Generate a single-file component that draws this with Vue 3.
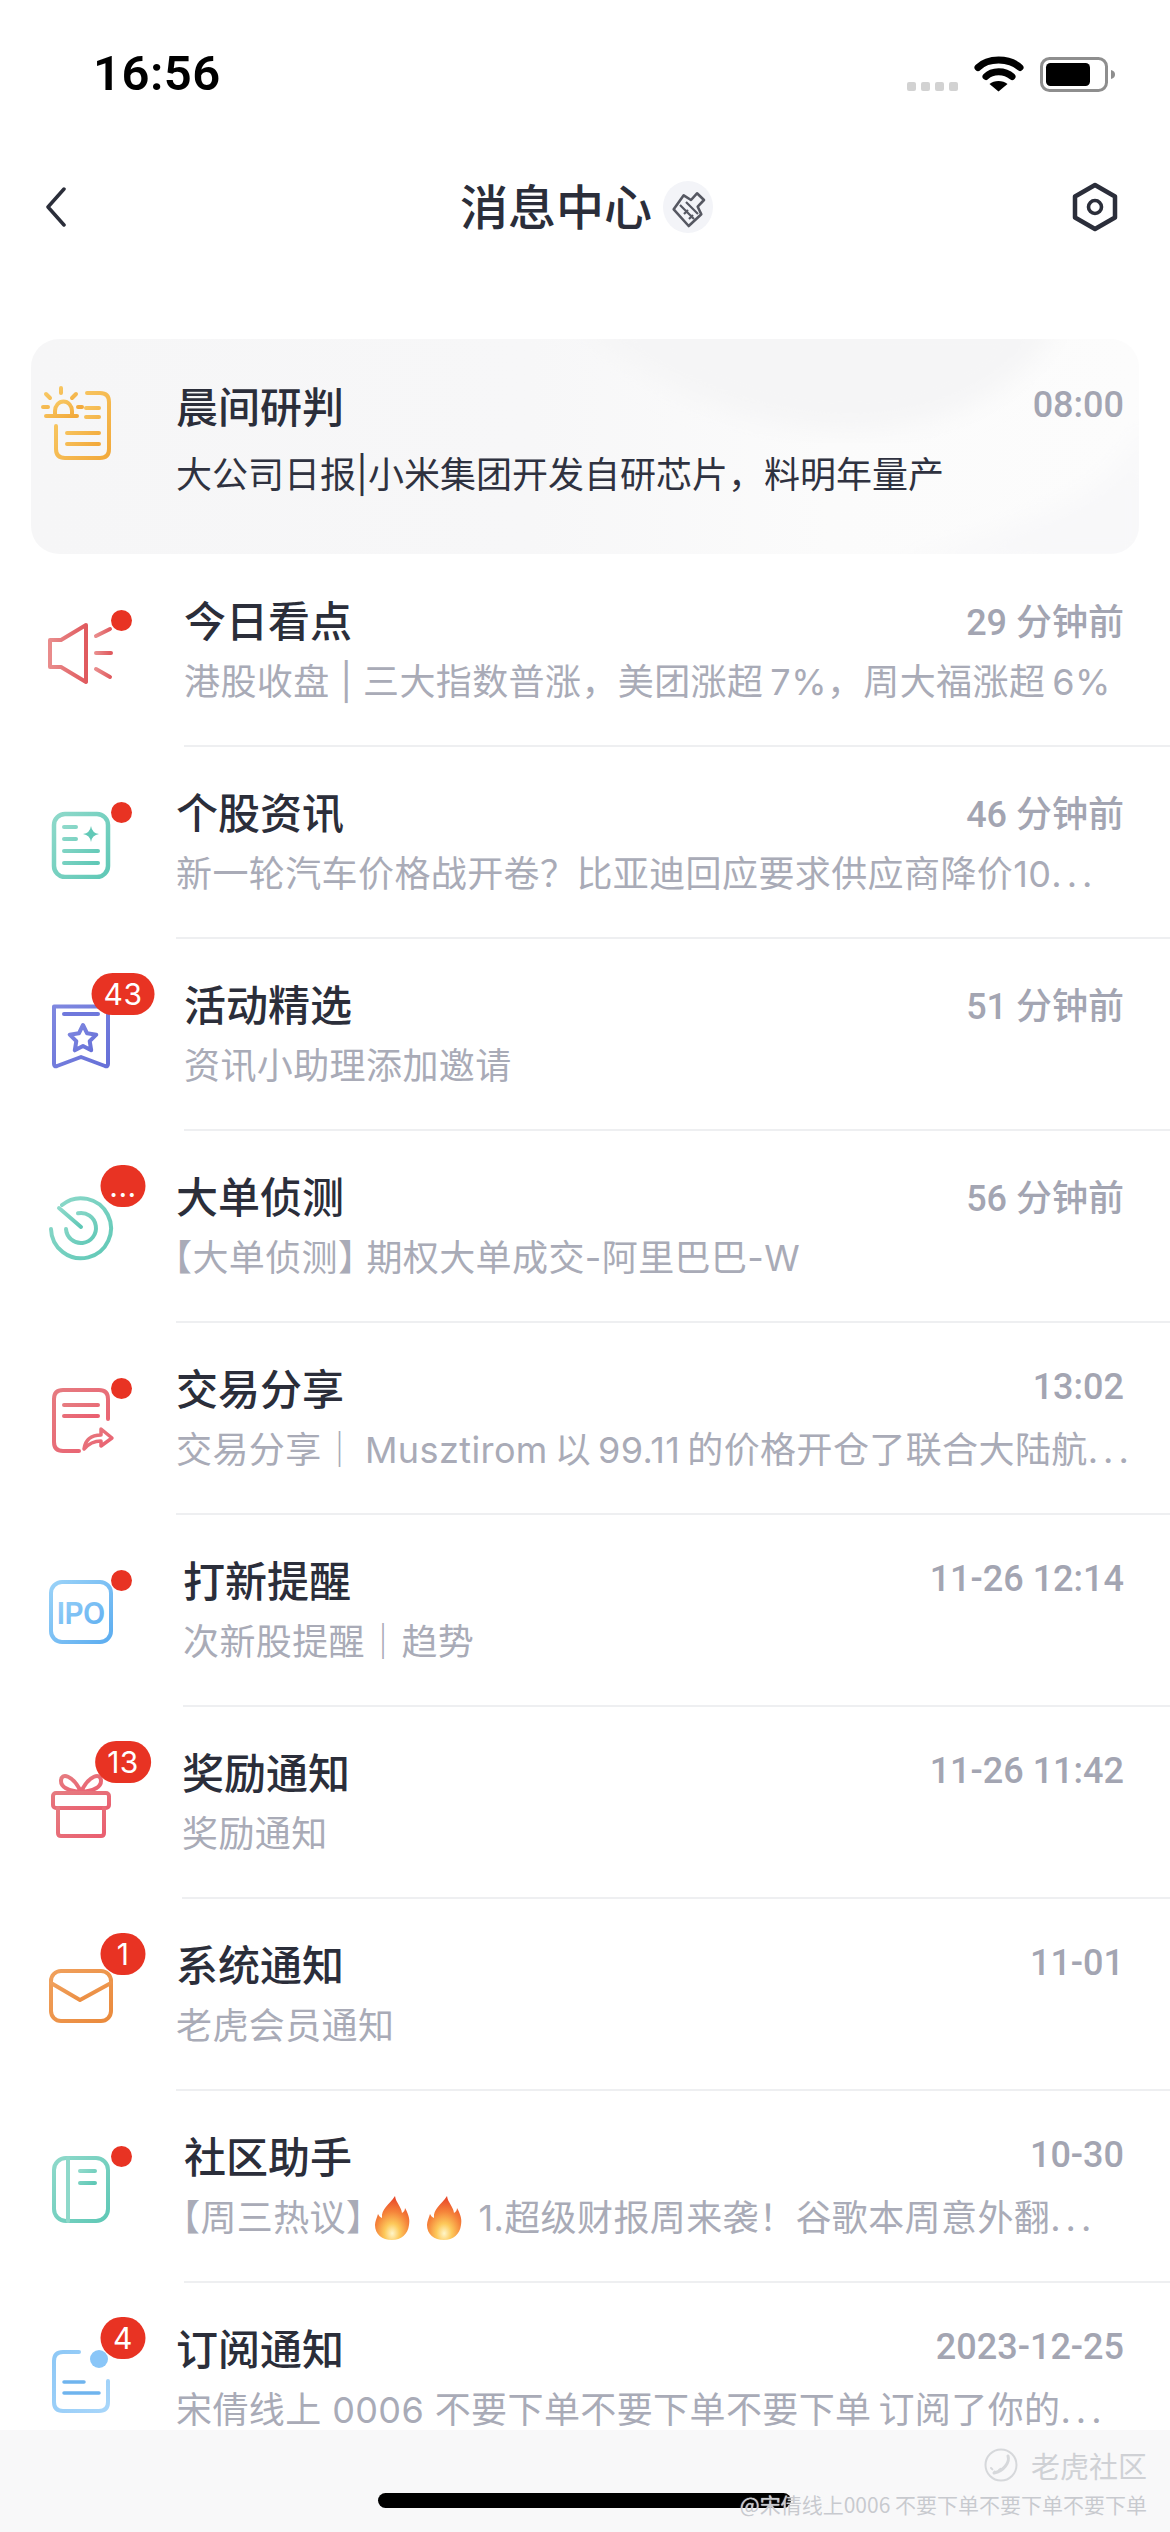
<template>
  <div class="page">
    <svg class="defs" width="0" height="0">
      <defs>
        <linearGradient id="g-red" x1="0" y1="0" x2="1" y2="0"><stop offset="0" stop-color="#e98c8c" /><stop offset="1" stop-color="#e05a5e" /></linearGradient>
        <linearGradient id="g-teal" x1="0" y1="0" x2="1" y2="1"><stop offset="0" stop-color="#8ed9ca" /><stop offset="1" stop-color="#5fc8b6" /></linearGradient>
        <linearGradient id="g-violet" x1="0" y1="0" x2="1" y2="1"><stop offset="0" stop-color="#7f88e0" /><stop offset="1" stop-color="#6670d8" /></linearGradient>
        <linearGradient id="g-rose" x1="0" y1="0" x2="1" y2="1"><stop offset="0" stop-color="#e67b80" /><stop offset="1" stop-color="#ea5f70" /></linearGradient>
        <linearGradient id="g-blue" x1="0" y1="0" x2="1" y2="1"><stop offset="0" stop-color="#9ad2f8" /><stop offset="1" stop-color="#5cadf0" /></linearGradient>
        <linearGradient id="g-orange" x1="0" y1="0" x2="1" y2="1"><stop offset="0" stop-color="#f0a05c" /><stop offset="1" stop-color="#ea8a3c" /></linearGradient>
        <linearGradient id="g-sky" x1="0" y1="0" x2="1" y2="1"><stop offset="0" stop-color="#8ec8f6" /><stop offset="1" stop-color="#a8d6fa" /></linearGradient>
        <linearGradient id="g-amber" x1="0" y1="0" x2="1" y2="1"><stop offset="0" stop-color="#f9cd6a" /><stop offset="1" stop-color="#f2a93b" /></linearGradient>
        <radialGradient id="g-flame" cx="0.5" cy="0.85" r="0.8">
          <stop offset="0" stop-color="#fff6c8" />
          <stop offset="0.28" stop-color="#fdc95a" />
          <stop offset="0.62" stop-color="#f5843a" />
          <stop offset="1" stop-color="#e9482a" />
        </radialGradient>
      </defs>
    </svg>

    <header class="status">
      <span class="clock">16:56</span>
      <svg class="status-icons" width="208" height="37" viewBox="0 0 208 37">
        <rect x="0" y="27" width="9" height="9" rx="2" fill="#d2d2d2" />
        <rect x="14" y="27" width="9" height="9" rx="2" fill="#d2d2d2" />
        <rect x="28" y="27" width="9" height="9" rx="2" fill="#d2d2d2" />
        <rect x="42" y="27" width="9" height="9" rx="2" fill="#d2d2d2" />
        <path d="M71 12.500C81 2.500 102 2.500 113 12.500" fill="none" stroke="#000" stroke-width="7" stroke-linecap="round" />
        <path d="M79 21.500C85 15 98 15 105 21.500" fill="none" stroke="#000" stroke-width="7" stroke-linecap="round" />
        <path d="M82.500 29C87 25 96 25 100.500 29L91.500 36.500Z" fill="#000" />
        <rect x="134.500" y="3.500" width="65" height="32" rx="8" fill="none" stroke="#8e8e8e" stroke-width="3" />
        <rect x="139" y="8" width="44" height="23" rx="4.500" fill="#000" />
        <path d="M204 15C207 15.500 208 17.500 208 19.500C208 21.500 207 23.500 204 24Z" fill="#8e8e8e" />
      </svg>
    </header>

    <nav class="nav">
      <svg class="nav-back" width="22" height="40" viewBox="0 0 22 40">
        <path d="M19 2L3 20L19 38" fill="none" stroke="#2b2e3a" stroke-width="3.500" stroke-linecap="round" stroke-linejoin="round" />
      </svg>
      <div class="nav-center">
        <span class="nav-title">消息中心</span>
        <span class="nav-mark">
          <svg width="50" height="52" viewBox="0 0 50 52">
            <path d="M20.700 14.300L28 19L34 12.300L41 19L34.700 25.700L38.300 33.300L25.700 45L10.700 28.300Z" fill="none" stroke="#565862" stroke-width="2.600" stroke-linejoin="round" />
            <path d="M17 24L31 38M21 33L25 29M26 38L30 34M23 21L35 33" fill="none" stroke="#565862" stroke-width="2.200" />
          </svg>
        </span>
      </div>
      <svg class="nav-gear" width="48" height="50" viewBox="0 0 48 50">
        <path d="M24 3L44 14.500V35.500L24 47L4 35.500V14.500Z" fill="none" stroke="#2b2e3a" stroke-width="4.500" stroke-linejoin="round" />
        <circle cx="24" cy="25" r="6.500" fill="none" stroke="#2b2e3a" stroke-width="3.600" />
      </svg>
    </nav>

    <section class="card">
      <svg class="card-waves" width="1108" height="215" viewBox="0 0 1108 215">
        <defs>
          <filter id="soft"><feGaussianBlur stdDeviation="12" /></filter>
        </defs>
        <path d="M540 -20C620 50 720 92 820 92C900 92 990 60 1030 -20Z" fill="#f5f5f6" filter="url(#soft)" />
        <path d="M1108 92C1085 160 980 190 860 225H1120V92Z" fill="#f8f8f9" filter="url(#soft)" />
      </svg>
      <svg class="card-icon" width="72" height="80" viewBox="0 0 72 80" fill="none" stroke="url(#g-amber)" stroke-width="4" stroke-linecap="round" stroke-linejoin="round">
        <path d="M47 9H60Q69 9 69 18V65Q69 74 60 74H25Q16 74 16 65V42" />
        <path d="M46 24H59M46 33H59M27 49H59M27 60H59" />
        <path d="M15 31V27A8 9 0 0 1 32 27V31M6 32H37" />
        <path d="M21 4V9M6 10L10 14M36 10L32 14M3 23H8M38 23H42" />
      </svg>
      <div class="card-text">
        <div class="line">
          <span class="title">晨间研判</span>
          <span class="time">08:00</span>
        </div>
        <p class="card-sub">大公司日报|小米集团开发自研芯片，料明年量产</p>
      </div>
    </section>

    <ul class="list">
      <li v-for="row in rows" :key="row.title" class="row">
        <div class="icon">
          <svg v-if="row.icon === 'speaker'" width="72" height="72" viewBox="0 0 72 72" fill="none" stroke="url(#g-red)" stroke-width="4" stroke-linecap="round" stroke-linejoin="round">
            <path d="M41 10L16 25H5V52H16L41 67Z" />
            <path d="M51 21L65 14M51 38H66M51 54L65 62" />
          </svg>
          <svg v-else-if="row.icon === 'doc'" width="72" height="72" viewBox="0 0 72 72" fill="none" stroke="url(#g-teal)" stroke-width="4.500" stroke-linecap="round">
            <rect x="9" y="7" width="54" height="63" rx="11" />
            <path d="M19 20H31M19 32H31M19 44H53M19 56H53" stroke-width="4" />
            <path d="M46 19Q47 26 54 27Q47 28 46 35Q45 28 38 27Q45 26 46 19Z" fill="#62c9b7" stroke="none" />
          </svg>
          <svg v-else-if="row.icon === 'bookmark'" width="72" height="72" viewBox="0 0 72 72" fill="none" stroke="url(#g-violet)" stroke-width="4" stroke-linecap="round" stroke-linejoin="round">
            <path d="M9 7.500H63V65Q63 68 60 67L36 58L12 67Q9 68 9 65Z" />
            <path d="M19 15H53" stroke="#6f78dc" />
            <path d="M38 26L42.100 34.300L51.300 35.700L44.700 42.200L46.200 51.300L38 47L29.800 51.300L31.300 42.200L24.700 35.700L33.900 34.300Z" />
          </svg>
          <svg v-else-if="row.icon === 'radar'" width="72" height="72" viewBox="0 0 72 72" fill="none" stroke="url(#g-teal)" stroke-width="4" stroke-linecap="round">
            <path d="M17 14A30 30 0 1 1 6 38" />
            <path d="M33 22.300A15 15 0 1 1 21 38" />
            <path d="M14 17L36 36" />
          </svg>
          <svg v-else-if="row.icon === 'share'" width="72" height="72" viewBox="0 0 72 72" fill="none" stroke="url(#g-rose)" stroke-width="4" stroke-linecap="round" stroke-linejoin="round">
            <path d="M63 36V16Q63 7 54 7H18Q9 7 9 16V59Q9 68 18 68H34" />
            <path d="M19 22H53M19 33H53" />
            <path d="M39 66Q41 52 56 52V46L67 55L56 63V58Q46 58 39 66Z" stroke-width="3.500" />
          </svg>
          <svg v-else-if="row.icon === 'ipo'" width="72" height="72" viewBox="0 0 72 72" fill="none">
            <rect x="6" y="7" width="60" height="60" rx="11" stroke="url(#g-blue)" stroke-width="4" />
            <text class="ipo-text" x="12" y="49" textLength="48" lengthAdjust="spacingAndGlyphs" fill="url(#g-blue)">IPO</text>
          </svg>
          <svg v-else-if="row.icon === 'gift'" width="72" height="72" viewBox="0 0 72 72" fill="none" stroke="url(#g-rose)" stroke-width="4" stroke-linecap="round" stroke-linejoin="round">
            <path d="M36 25C28 8 16 5 16 14C16 21 26 24 36 25C44 8 56 5 56 14C56 21 46 24 36 25" />
            <rect x="8" y="26" width="56" height="15" rx="3" />
            <path d="M13 41V66Q13 69 16 69H56Q59 69 59 66V41" />
          </svg>
          <svg v-else-if="row.icon === 'mail'" width="72" height="72" viewBox="0 0 72 72" fill="none" stroke="url(#g-orange)" stroke-width="4" stroke-linecap="round" stroke-linejoin="round">
            <rect x="6" y="12" width="60" height="50" rx="10" />
            <path d="M6 24L35 41L66 24" />
          </svg>
          <svg v-else-if="row.icon === 'book'" width="72" height="72" viewBox="0 0 72 72" fill="none" stroke="url(#g-teal)" stroke-width="4" stroke-linecap="round">
            <rect x="9" y="7" width="54" height="63" rx="12" />
            <path d="M23 7V70" stroke="#8ed9ca" />
            <path d="M35 20H50M35 32H50" />
          </svg>
          <svg v-else width="72" height="72" viewBox="0 0 72 72" fill="none" stroke="url(#g-sky)" stroke-width="4" stroke-linecap="round" stroke-linejoin="round">
            <path d="M34 9H18Q9 9 9 18V59Q9 68 18 68H54Q63 68 63 59V38" />
            <path d="M19 39H39M19 50H54" stroke="#6fb4ee" stroke-width="3.500" />
            <circle cx="54" cy="16" r="9" fill="#8ac6f8" stroke="none" />
          </svg>
          <span v-if="row.badge" class="badge" :class="{ 'badge-more': row.badge === '...' }">{{ row.badge }}</span>
          <span v-else class="dot"></span>
        </div>
        <div class="body" :style="{ marginLeft: row.left - 117 + 'px' }">
          <div class="line">
            <span class="title">{{ row.title }}</span>
            <span class="time">{{ row.time }}</span>
          </div>
          <p class="sub">
            <span v-if="row.lead" class="lead">{{ row.lead }}</span>
            <template v-if="row.flames">
              <svg v-for="n in 2" :key="n" class="flame" width="36" height="46" viewBox="0 0 36 46">
                <path d="M21 1C22 8 27 11 28 18C30 17 31 15 31 13C35 20 36 25 35 30C34 39 27 45 18 45C8 45 1 39 1 30C1 26 3 23 4 19C5 21 6 22 8 23C7 14 15 10 21 1Z" fill="url(#g-flame)" />
              </svg>
            </template>
            <span>{{ row.sub }}</span>
            <span v-if="row.more" class="more">...</span>
          </p>
        </div>
      </li>
    </ul>

    <footer class="footer">
      <div class="home"></div>
      <div class="mark">
        <div class="mark-top">
          <svg width="34" height="34" viewBox="0 0 34 34" fill="none" stroke="#d6d8db" stroke-width="2" stroke-linecap="round">
            <circle cx="17" cy="17" r="15.500" />
            <path d="M24 8C26 14 20 23 10 25" stroke-width="3" />
            <path d="M7 20L11 24M15 22L19 19" stroke-dasharray="2 3" />
          </svg>
          <span>老虎社区</span>
        </div>
        <div class="mark-user">@宋倩线上0006 不要下单不要下单不要下单</div>
      </div>
    </footer>
  </div>
</template>

<script setup>
const rows = [
  { icon: 'speaker', left: 184, title: '今日看点', time: '29 分钟前', sub: '港股收盘 | 三大指数普涨，美团涨超\u20097%，周大福涨超\u20096%' },
  { icon: 'doc', left: 176, title: '个股资讯', time: '46 分钟前', sub: '新一轮汽车价格战开卷？比亚迪回应要求供应商降价10', more: true },
  { icon: 'bookmark', left: 184, title: '活动精选', time: '51 分钟前', sub: '资讯小助理添加邀请', badge: '43' },
  { icon: 'radar', left: 176, title: '大单侦测', time: '56 分钟前', lead: '【大单侦测】', sub: '期权大单成交-阿里巴巴-W', badge: '...' },
  { icon: 'share', left: 176, title: '交易分享', time: '13:02', sub: '交易分享｜\u2009Musztirom\u2009以\u200999.11\u2009的价格开仓了联合大陆航', more: true },
  { icon: 'ipo', left: 183, title: '打新提醒', time: '11-26 12:14', sub: '次新股提醒｜趋势' },
  { icon: 'gift', left: 182, title: '奖励通知', time: '11-26 11:42', sub: '奖励通知', badge: '13' },
  { icon: 'mail', left: 176, title: '系统通知', time: '11-01', sub: '老虎会员通知', badge: '1' },
  { icon: 'book', left: 184, title: '社区助手', time: '10-30', lead: '【周三热议】', flames: true, sub: '1.超级财报周来袭！谷歌本周意外翻', more: true },
  { icon: 'sub', left: 176, title: '订阅通知', time: '2023-12-25', sub: '宋倩线上 0006 不要下单不要下单不要下单\u2009订阅了你的', more: true, badge: '4' }
]
</script>

<style scoped>
.page {
  position: relative;
  width: 1170px;
  height: 2532px;
  display: flex;
  flex-direction: column;
  overflow: hidden;
  background: #fff;
  color: #2b2e3a;
  font-family: Inter, "Noto Sans CJK SC", sans-serif;
}

.defs {
  position: absolute;
}

.status {
  flex: none;
  height: 146px;
  padding: 0 55px 0 93px;
  display: flex;
  align-items: center;
  justify-content: space-between;
}

.clock {
  font-family: Roboto, sans-serif;
  font-size: 49px;
  font-weight: 600;
  letter-spacing: .5px;
  color: #000;
}

.nav {
  flex: none;
  height: 122px;
  padding: 0 51px 0 45px;
  display: grid;
  grid-template-columns: 1fr auto 1fr;
  align-items: center;
}

.nav-gear {
  justify-self: end;
}

.nav-center {
  margin-left: 9px;
  display: flex;
  align-items: center;
  gap: 11px;
}

.nav-title {
  margin-bottom: 6px;
  font-family: "Noto Sans CJK SC", sans-serif;
  font-size: 48px;
  line-height: 60px;
  font-weight: 500;
}

.nav-mark {
  width: 50px;
  height: 52px;
  border-radius: 50%;
  background: #f3f4f8;
}

.card {
  position: relative;
  flex: none;
  height: 215px;
  margin: 71px 31px 1px;
  padding-right: 15px;
  display: flex;
  overflow: hidden;
  border-radius: 28px;
  background: linear-gradient(90deg, #f6f6f7 0%, #f7f7f8 45%, #fbfbfb 72%, #fcfcfc 100%);
}

.card-waves {
  position: absolute;
  top: 0;
  left: 0;
}

.card-icon {
  position: relative;
  flex: none;
  margin: 45px 64px 0 9px;
}

.card-text {
  position: relative;
  flex: 1;
  min-width: 0;
  padding-top: 38px;
}

.card-sub {
  margin: 14px 0 0;
  font-size: 36px;
  line-height: 56px;
  color: #2f3240;
}

.list {
  flex: 1;
  min-height: 0;
  margin: 0;
  padding: 0;
  list-style: none;
  overflow: hidden;
}

.row {
  height: 192px;
  padding-left: 45px;
  display: flex;
  align-items: center;
}

.icon {
  position: relative;
  flex: none;
  width: 72px;
  height: 72px;
}

.icon svg {
  display: block;
}

.ipo-text {
  font-family: "Liberation Sans", sans-serif;
  font-size: 32px;
  font-weight: 700;
}

.dot {
  position: absolute;
  top: -5px;
  left: 66px;
  width: 21px;
  height: 21px;
  border-radius: 50%;
  background: #e83323;
}

.badge {
  position: absolute;
  top: -26px;
  left: 78px;
  min-width: 45px;
  height: 42px;
  padding: 0 12px;
  box-sizing: border-box;
  transform: translateX(-50%);
  border-radius: 21px;
  background: #e83323;
  color: #fff;
  font-family: Inter, sans-serif;
  font-size: 30px;
  line-height: 42px;
  letter-spacing: .5px;
  text-align: center;
}

.badge-more {
  padding: 0;
}

.body {
  flex: 1;
  min-width: 0;
  height: 192px;
  padding: 36px 46px 0 0;
  box-sizing: border-box;
  border-bottom: 2px solid #eeeff1;
}

.line {
  height: 56px;
  display: flex;
  align-items: center;
  justify-content: space-between;
}

.title {
  font-family: "Noto Sans CJK SC", sans-serif;
  font-size: 42px;
  line-height: 56px;
  font-weight: 500;
}

.time {
  font-family: Roboto, "Noto Sans CJK SC", sans-serif;
  font-size: 36px;
  font-weight: 500;
  color: #a3a5b2;
}

.sub {
  margin: 5px 0 0;
  height: 60px;
  font-size: 36px;
  line-height: 60px;
  letter-spacing: .4px;
  color: #a9abb7;
  white-space: nowrap;
}

.lead {
  margin: 0 -8px 0 -20px;
}

.flame {
  margin-right: 16px;
  vertical-align: -10px;
}

.more {
  letter-spacing: 5px;
}

.footer {
  position: relative;
  flex: none;
  height: 102px;
  background: #f8f8f9;
}

.home {
  width: 413px;
  height: 15px;
  margin: 63px 0 0 378px;
  border-radius: 8px;
  background: #000;
}

.mark {
  position: absolute;
  top: 18px;
  right: 23px;
  display: flex;
  flex-direction: column;
  align-items: flex-end;
  color: #cfd1d5;
  font-family: "Noto Sans CJK SC", sans-serif;
}

.mark-top {
  display: flex;
  align-items: center;
  gap: 13px;
  font-size: 29px;
  line-height: 34px;
}

.mark-user {
  margin-top: 8px;
  font-size: 21px;
  line-height: 28px;
  color: #c8cacf;
  text-shadow: 0 0 1px rgba(255, 255, 255, .9);
}

p {
  font-family: Inter, "Noto Sans CJK SC", sans-serif;
}
</style>
